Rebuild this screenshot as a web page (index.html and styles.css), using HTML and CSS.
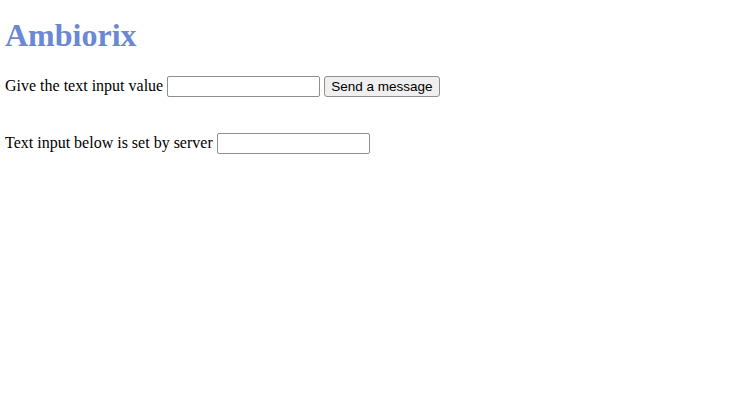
FILE: index.html
```html
<!DOCTYPE html>
<html lang="en">
<head>
  <meta charset="UTF-8" />
  <title>Ambiorix</title>
  <link rel="stylesheet" href="styles.css">
</head>
<body>
  <h1 class="title">Ambiorix</h1>

  <div class="row">
    <label for="input">Give the text input value</label>
    <input type="text" id="input" />
    <button id="send">Send a message</button>
  </div>

  <div class="row server">
    <label for="fromServer">Text input below is set by server</label>
    <input type="text" id="fromServer" />
  </div>
</body>
</html>
```

FILE: styles.css
```css
body {
  font-family: "Liberation Serif", serif;
  font-size: 16px;
  color: #000;
  margin: 5px;
  background: #fff;
}

.title {
  color: #6b88d4;
  font-size: 32px;
  margin: 12px 0 22px;
}

.row input {
  font-family: "Liberation Sans", sans-serif;
  font-size: 13px;
  width: 147px;
  height: 15px;
  border: 1px solid #8f8f8f;
  border-radius: 2px;
  padding: 2px;
}

.row button {
  font-family: "Liberation Sans", sans-serif;
  font-size: 13.5px;
  height: 21px;
  padding: 0 6px;
  border: 1px solid #8f8f8f;
  border-radius: 3px;
  background: #efefef;
  color: #000;
}

.server {
  margin-top: 36px;
}
```
